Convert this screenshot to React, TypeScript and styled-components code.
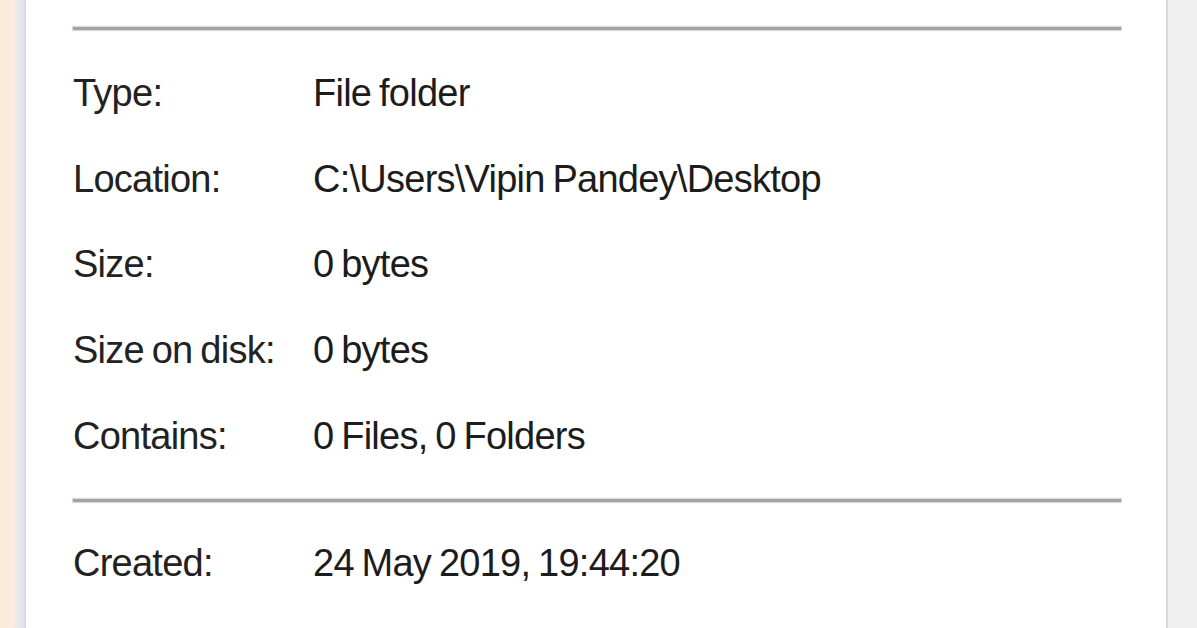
import styled, { createGlobalStyle } from 'styled-components';

const GlobalStyle = createGlobalStyle`
  html, body {
    margin: 0;
    padding: 0;
    background: #efefef;
  }
  * {
    box-sizing: border-box;
  }
`;

const Window = styled.div`
  display: flex;
  width: 100%;
  height: 628px;
  overflow: hidden;
  font-family: 'Liberation Sans', Arial, sans-serif;
`;

const LeftEdge = styled.div`
  flex: 0 0 26px;
  background: linear-gradient(
    to right,
    #fcebd8 0,
    #fbecdd 13px,
    #e8e7ef 19px,
    #e0e2ed 23px,
    #d3d6e3 26px
  );
`;

const Panel = styled.section`
  flex: 1;
  background: #ffffff;
  padding: 27px 45px 0 47px;
`;

const RightGutter = styled.div`
  flex: 0 0 31px;
  background: #efefef;
  border-left: 2px solid #d9d9d9;
`;

const Divider = styled.hr`
  margin: 0;
  border: none;
  height: 3px;
  background: #a2a2a2;
  box-shadow: 0 0 1px 1px #dcdcdc;
`;

const Section = styled.div<{ $top: number; $bottom: number }>`
  display: grid;
  grid-template-columns: 240px 1fr;
  grid-auto-rows: 85.7px;
  padding: ${({ $top }) => $top}px 0 ${({ $bottom }) => $bottom}px;
`;

const Label = styled.span`
  font-size: 38px;
  line-height: 85.7px;
  letter-spacing: -0.75px;
  word-spacing: -2px;
  color: #222222;
  white-space: nowrap;
`;

const Value = styled(Label)`
  color: #1c1c1c;
`;

const details: [string, string][] = [
  ['Type:', 'File folder'],
  ['Location:', 'C:\\Users\\Vipin Pandey\\Desktop'],
  ['Size:', '0 bytes'],
  ['Size on disk:', '0 bytes'],
  ['Contains:', '0 Files, 0 Folders'],
];

export default function App() {
  return (
    <>
      <GlobalStyle />
      <Window>
        <LeftEdge />
        <Panel>
          <Divider />
          <Section $top={21} $bottom={19.5}>
            {details.flatMap(([label, value]) => [
              <Label key={label}>{label}</Label>,
              <Value key={label + '-v'}>{value}</Value>,
            ])}
          </Section>
          <Divider />
          <Section $top={19} $bottom={0}>
            <Label>Created:</Label>
            <Value>24 May 2019, 19:44:20</Value>
          </Section>
        </Panel>
        <RightGutter />
      </Window>
    </>
  );
}
